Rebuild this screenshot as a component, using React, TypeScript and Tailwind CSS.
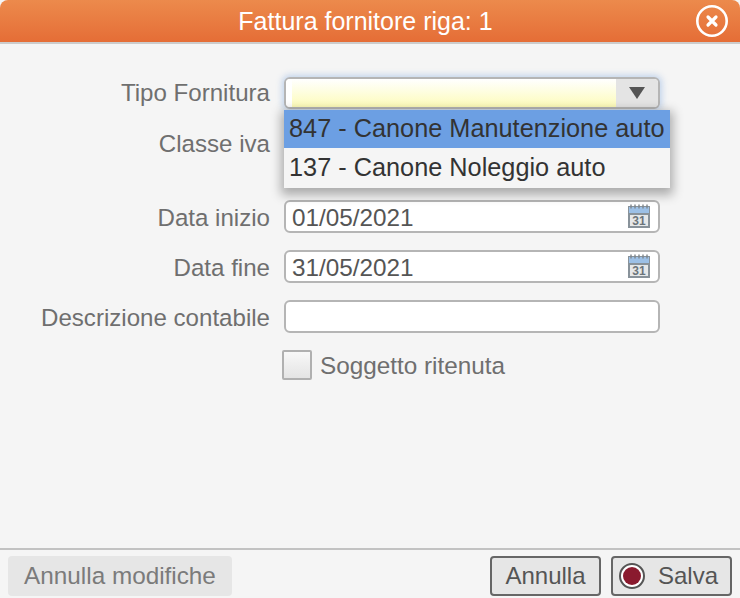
import type { ReactNode } from 'react'

const font = { fontFamily: '"Liberation Sans", Arial, sans-serif' }

function CalendarIcon() {
  return (
    <svg width="24" height="25" viewBox="0 0 24 25" className="shrink-0">
      <rect x="1" y="2" width="22" height="22" fill="#88929a" />
      <rect x="2" y="3" width="20" height="6" fill="#9cc0e6" />
      <rect x="3" y="11" width="18" height="11" fill="#e6e8e9" />
      <path d="M4 0.5v4M8 0.5v4M12 0.5v4M16 0.5v4M20 0.5v4" stroke="#7d858c" strokeWidth="1.4" />
      <text x="12" y="21" textAnchor="middle" fontSize="12" fontWeight="700" fill="#6b747b" fontFamily="Liberation Sans">
        31
      </text>
    </svg>
  )
}

function Row({ label, className, children }: { label: string; className?: string; children?: ReactNode }) {
  return (
    <div className={`flex items-center ${className ?? ''}`}>
      <label className="w-[270px] text-right text-[24.1px] text-[#6f6f6f] leading-none whitespace-nowrap">{label}</label>
      <div className="ml-[14px] w-[376px] h-full">{children}</div>
    </div>
  )
}

function DateInput({ value }: { value: string }) {
  return (
    <div className="h-full flex items-center justify-between pl-[6px] pr-[7px] bg-white rounded-[6px] border-2 border-[#b5b5b5] text-[24.3px] text-[#555]">
      <span className="pt-[3px]">{value}</span>
      <CalendarIcon />
    </div>
  )
}

export default function App() {
  return (
    <div style={font} className="relative w-[740px] h-[598px] overflow-hidden bg-[#f5f5f5] flex flex-col">
      <header className="h-[44px] shrink-0 pr-[9px] rounded-t-[8px] border-b-2 border-[#cccccc] bg-gradient-to-b from-[#ec8a4c] to-[#e56d36] flex items-center justify-center relative">
        <h1 className="text-[25px] text-white leading-none">Fattura fornitore riga: 1</h1>
        <svg width="34" height="34" viewBox="0 0 34 34" className="absolute right-[11px] top-[4px]">
          <circle cx="17" cy="17" r="14.7" fill="none" stroke="white" strokeWidth="2.6" />
          <path d="M13 13l8 8M21 13l-8 8" stroke="white" strokeWidth="3.2" strokeLinecap="round" />
        </svg>
      </header>

      <main className="flex-1 pt-[33px]">
        <Row label="Tipo Fornitura" className="h-[32px]">
          <div className="h-full flex rounded-[6px] border-2 border-[#b5b5b5] bg-white overflow-hidden shadow-[0_0_6px_2px_rgba(130,170,225,0.45)]">
            <div className="w-[6px] bg-white" />
            <div className="flex-1 bg-gradient-to-b from-white to-[#fdfbb8]" />
            <div className="w-[42px] bg-[#e4e4e4] flex items-center justify-center">
              <svg width="16" height="12" viewBox="0 0 16 12">
                <path d="M0 0h16l-8 12z" fill="#555555" />
              </svg>
            </div>
          </div>
        </Row>
        <Row label="Classe iva" className="h-[32px] mt-[19px]" />
        <Row label="Data inizio" className="h-[33px] mt-[40px] [&>label]:pt-[3px]">
          <DateInput value="01/05/2021" />
        </Row>
        <Row label="Data fine" className="h-[33px] mt-[17px] [&>label]:pt-[3px]">
          <DateInput value="31/05/2021" />
        </Row>
        <Row label="Descrizione contabile" className="h-[33px] mt-[17px] [&>label]:pt-[3px]">
          <div className="h-full rounded-[6px] border-2 border-[#b5b5b5] bg-white" />
        </Row>
        <div className="flex items-center mt-[17px] pl-[282px]">
          <div className="w-[30px] h-[30px] rounded-[2px] border-2 border-[#b0b0b0] bg-gradient-to-b from-[#f8f8f8] to-[#e4e4e4]" />
          <span className="ml-[8px] pt-[2px] text-[24.3px] text-[#6f6f6f] leading-none">Soggetto ritenuta</span>
        </div>
      </main>

      <footer className="h-[50px] shrink-0 border-t-2 border-[#c2c2c2] flex items-start justify-between pt-[6px] pl-[8px] pr-[8px]">
        <button className="h-[40px] w-[224px] rounded-[4px] bg-[#e6e6e6] text-[24.3px] text-[#7b7b7b]">Annulla modifiche</button>
        <div className="flex gap-[10px]">
          <button className="h-[40px] w-[111px] rounded-[4px] border-2 border-[#666] bg-[#e6e6e6] text-[24px] text-[#555]">Annulla</button>
          <button className="h-[40px] w-[121px] rounded-[4px] border-2 border-[#666] bg-[#e6e6e6] text-[24px] text-[#555] flex items-center pl-[6px]">
            <span className="w-[26px] h-[26px] rounded-full border-2 border-[#555] bg-white flex items-center justify-center">
              <span className="w-[18px] h-[18px] rounded-full bg-[#8a1a2e]" />
            </span>
            <span className="ml-[13px]">Salva</span>
          </button>
        </div>
      </footer>

      <ul className="absolute left-[284px] top-[110px] w-[386px] bg-[#f5f5f5] text-[#333] text-[25.3px] leading-none shadow-[0_4px_10px_3px_rgba(0,0,0,0.3)]">
        <li className="h-[38px] flex items-center pb-[1px] pl-[5px] bg-[#6c9fe3] whitespace-nowrap">847 - Canone Manutenzione auto</li>
        <li className="h-[38px] mt-[2px] flex items-center pb-[2px] pl-[5px] whitespace-nowrap">137 - Canone Noleggio auto</li>
      </ul>
    </div>
  )
}
